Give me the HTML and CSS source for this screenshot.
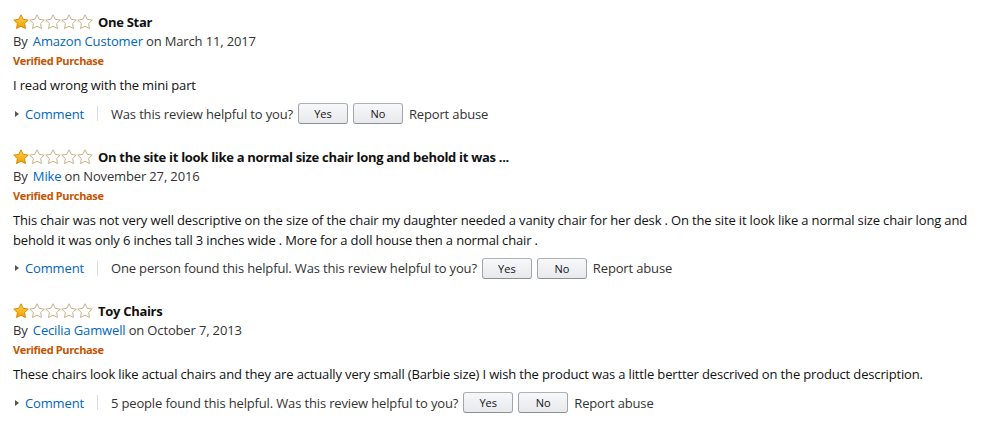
FILE: index.html
```html
<!DOCTYPE html>
<html>
<head>
<meta charset="utf-8">
<link rel="stylesheet" href="styles.css">
</head>
<body>
<svg width="0" height="0" class="defs">
  <defs>
    <linearGradient id="gold" x1="0" y1="0" x2="0" y2="1">
      <stop offset="0" stop-color="#ffd24a"/>
      <stop offset="1" stop-color="#f29e00"/>
    </linearGradient>
    <path id="star" d="M8 0.8 L10.23 5.33 L15.23 6.05 L11.61 9.57 L12.47 14.55 L8 12.2 L3.53 14.55 L4.39 9.57 L0.77 6.05 L5.77 5.33 Z"/>
  </defs>
</svg>

<div class="reviews">
  <div class="review">
    <div class="title-row">
      <svg class="stars" width="80" height="16" viewBox="0 0 80 16">
        <use href="#star" x="0" class="full"/>
        <use href="#star" x="16" class="empty"/>
        <use href="#star" x="32" class="empty"/>
        <use href="#star" x="48" class="empty"/>
        <use href="#star" x="64" class="empty"/>
      </svg>
      <span class="title">One Star</span>
    </div>
    <div class="byline">By <a class="link">Amazon Customer</a> on March 11, 2017</div>
    <div class="verified">Verified Purchase</div>
    <div class="body">I read wrong with the mini part</div>
    <div class="actions">
      <span class="comment"><span class="tri"></span><a class="link">Comment</a></span>
      <span class="sep"></span>
      <span class="helpful">Was this review helpful to you?</span>
      <button class="btn">Yes</button>
      <button class="btn">No</button>
      <span class="report">Report abuse</span>
    </div>
  </div>

  <div class="review">
    <div class="title-row">
      <svg class="stars" width="80" height="16" viewBox="0 0 80 16">
        <use href="#star" x="0" class="full"/>
        <use href="#star" x="16" class="empty"/>
        <use href="#star" x="32" class="empty"/>
        <use href="#star" x="48" class="empty"/>
        <use href="#star" x="64" class="empty"/>
      </svg>
      <span class="title">On the site it look like a normal size chair long and behold it was ...</span>
    </div>
    <div class="byline">By <a class="link">Mike</a> on November 27, 2016</div>
    <div class="verified">Verified Purchase</div>
    <div class="body">This chair was not very well descriptive on the size of the chair my daughter needed a vanity chair for her desk . On the site it look like a normal size chair long and behold it was only 6 inches tall 3 inches wide . More for a doll house then a normal chair .</div>
    <div class="actions">
      <span class="comment"><span class="tri"></span><a class="link">Comment</a></span>
      <span class="sep"></span>
      <span class="helpful">One person found this helpful. Was this review helpful to you?</span>
      <button class="btn">Yes</button>
      <button class="btn">No</button>
      <span class="report">Report abuse</span>
    </div>
  </div>

  <div class="review">
    <div class="title-row">
      <svg class="stars" width="80" height="16" viewBox="0 0 80 16">
        <use href="#star" x="0" class="full"/>
        <use href="#star" x="16" class="empty"/>
        <use href="#star" x="32" class="empty"/>
        <use href="#star" x="48" class="empty"/>
        <use href="#star" x="64" class="empty"/>
      </svg>
      <span class="title">Toy Chairs</span>
    </div>
    <div class="byline">By <a class="link">Cecilia Gamwell</a> on October 7, 2013</div>
    <div class="verified">Verified Purchase</div>
    <div class="body">These chairs look like actual chairs and they are actually very small (Barbie size) I wish the product was a little bertter descrived on the product description.</div>
    <div class="actions">
      <span class="comment"><span class="tri"></span><a class="link">Comment</a></span>
      <span class="sep"></span>
      <span class="helpful">5 people found this helpful. Was this review helpful to you?</span>
      <button class="btn">Yes</button>
      <button class="btn">No</button>
      <span class="report">Report abuse</span>
    </div>
  </div>
</div>
</body>
</html>
```

FILE: styles.css
```css
html, body {
  margin: 0;
  padding: 0;
  background: #fff;
}
body {
  font-family: "Open Sans", "Noto Sans", Arial, sans-serif;
  font-size: 13px;
  letter-spacing: -0.15px;
  color: #111;
}
.defs {
  position: absolute;
  width: 0;
  height: 0;
}
.reviews {
  padding: 12px 0 0 13px;
  width: 972px;
  display: flex;
  flex-direction: column;
  gap: 22.5px;
}
.review {
  display: flex;
  flex-direction: column;
}
.title-row {
  display: flex;
  align-items: center;
  height: 20px;
  line-height: 20px;
}
.stars {
  display: block;
  margin-right: 5px;
}
.stars .full {
  fill: url(#gold);
  stroke: #d48600;
  stroke-width: 0.9;
  stroke-linejoin: round;
}
.stars .empty {
  fill: #fff;
  stroke: #bfa97c;
  stroke-width: 0.9;
  stroke-linejoin: round;
}
.title {
  font-weight: 700;
  letter-spacing: -0.3px;
  color: #111;
}
.byline {
  height: 19px;
  line-height: 19px;
  color: #333;
}
.byline .link {
  margin-left: 2px;
}
.link {
  color: #0066c0;
  text-decoration: none;
}
.verified {
  height: 20px;
  line-height: 20px;
  font-size: 11px;
  font-weight: 700;
  letter-spacing: -0.35px;
  color: #c45500;
}
.body {
  margin-top: 4px;
  line-height: 20px;
  color: #111;
}
.actions {
  margin-top: 8px;
  display: flex;
  align-items: center;
  height: 21px;
  color: #333;
}
.comment {
  display: flex;
  align-items: center;
  padding-left: 2px;
}
.tri {
  width: 0;
  height: 0;
  border-left: 4px solid #555;
  border-top: 3.5px solid transparent;
  border-bottom: 3.5px solid transparent;
  margin-right: 6px;
}
.sep {
  width: 1px;
  height: 15px;
  background: #ddd;
  margin: 0 13px 0 13px;
}
.btn {
  font-family: inherit;
  font-size: 11px;
  color: #111;
  width: 50px;
  height: 21px;
  padding: 0;
  margin-left: 5px;
  border: 1px solid #adb1b8;
  border-color: #adb1b8 #a2a6ac #8d9096;
  border-radius: 3px;
  background: linear-gradient(to bottom, #f7f8fa, #e7e9ec);
}
.report {
  margin-left: 6px;
}
```
